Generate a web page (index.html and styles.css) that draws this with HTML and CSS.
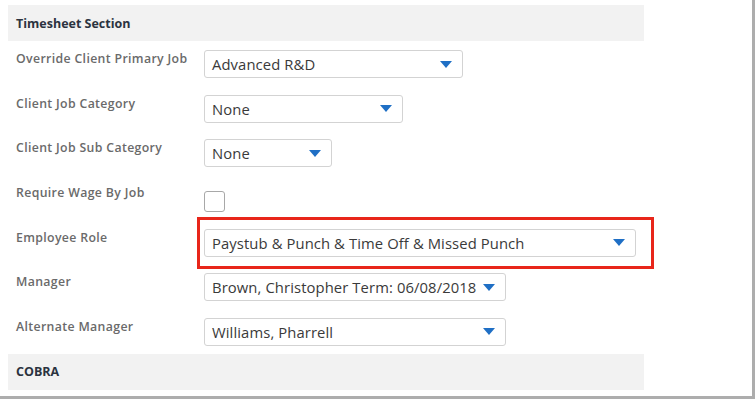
FILE: index.html
```html
<!DOCTYPE html>
<html>
<head>
    <title>Timesheet Section</title>
    <link rel="stylesheet" href="styles.css">
</head>
<body>
    <div class="frame">
        <div class="panel">
            <div class="section-head">Timesheet Section</div>

            <div class="field-row">
                <div class="field-label">Override Client Primary Job</div>
                <div class="select w-job"><span>Advanced R&amp;D</span><i class="caret"></i></div>
            </div>
            <div class="field-row">
                <div class="field-label">Client Job Category</div>
                <div class="select w-cat"><span>None</span><i class="caret"></i></div>
            </div>
            <div class="field-row">
                <div class="field-label">Client Job Sub Category</div>
                <div class="select w-sub"><span>None</span><i class="caret"></i></div>
            </div>
            <div class="field-row">
                <div class="field-label">Require Wage By Job</div>
                <div class="checkbox"></div>
            </div>
            <div class="field-row">
                <div class="field-label">Employee Role</div>
                <div class="highlight">
                    <div class="select w-role"><span>Paystub &amp; Punch &amp; Time Off &amp; Missed Punch</span><i class="caret"></i></div>
                </div>
            </div>
            <div class="field-row">
                <div class="field-label">Manager</div>
                <div class="select w-mgr"><span>Brown, Christopher Term: 06/08/2018</span><i class="caret"></i></div>
            </div>
            <div class="field-row">
                <div class="field-label">Alternate Manager</div>
                <div class="select w-mgr"><span>Williams, Pharrell</span><i class="caret"></i></div>
            </div>

            <div class="section-head">COBRA</div>
        </div>
    </div>
</body>
</html>
```
FILE: styles.css
```css
body { margin: 0; background: #fff; font-family: "Open Sans", Lato, sans-serif; }
.frame { width: 752px; height: 396px; border-right: 3px solid #adadad; border-bottom: 3px solid #adadad; overflow: hidden; }
.panel { width: 636px; margin-left: 8px; padding-top: 5px; }
.section-head { height: 36px; background: #f2f2f2; padding-left: 8px; display: flex; align-items: center; font-size: 12.5px; font-weight: 700; color: #2b3340; }
.field-row { display: flex; align-items: flex-start; padding: 9px 0 7.67px 8px; height: 28px; }
.field-label { width: 188px; padding-top: 1px; font-size: 12.3px; font-weight: 600; letter-spacing: 0.35px; color: #6a6a6a; line-height: 15px; }
.select { box-sizing: border-box; height: 28px; border: 1px solid #d3d3d3; border-radius: 3px; background: #fff; display: flex; align-items: center; justify-content: space-between; padding: 0 10px 0 7px; font-size: 14.8px; letter-spacing: 0.1px; color: #3a3a3a; }
.caret { width: 0; height: 0; border-left: 6px solid transparent; border-right: 6px solid transparent; border-top: 7px solid #1f6fc5; }
.w-job { width: 259px; }
.w-cat { width: 199px; }
.w-sub { width: 128px; }
.w-role { width: 432px; }
.w-mgr { width: 302px; }
.checkbox { box-sizing: border-box; width: 21px; height: 21px; margin-top: 7px; border: 1px solid #a8a8a8; border-radius: 3px; background: #fff; }
.highlight { position: relative; }
.highlight::after { content: ""; position: absolute; left: -7px; right: -18px; top: -12px; bottom: -12px; border: 3px solid #e8261a; pointer-events: none; }
```
